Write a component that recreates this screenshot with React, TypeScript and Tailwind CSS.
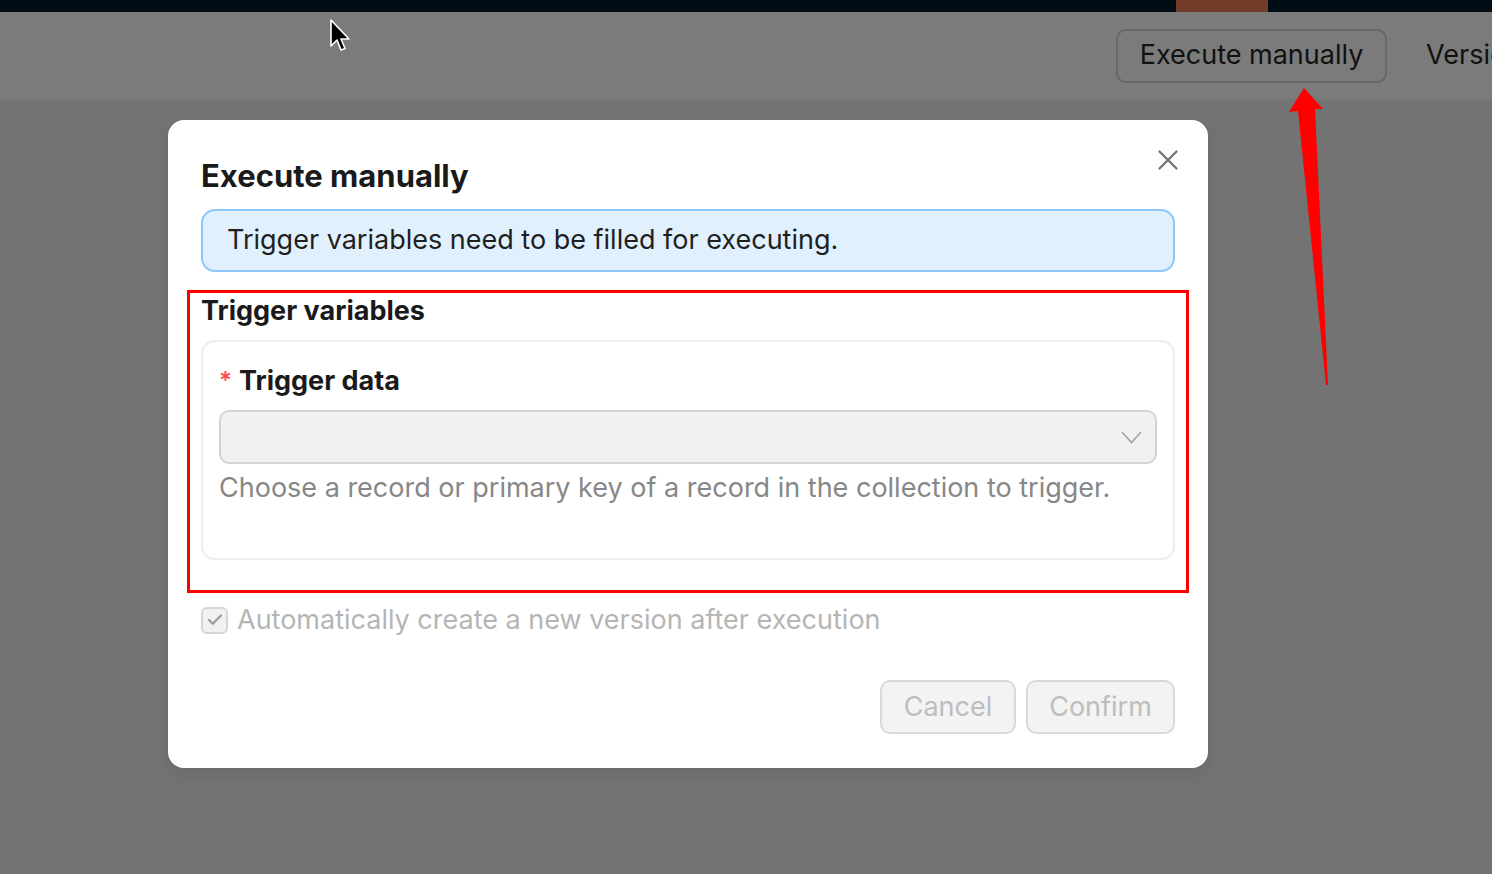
import { Check, X } from 'lucide-react'

export default function App() {
  return (
    <div className="relative h-[874px] w-[1492px] overflow-hidden bg-[#737373] font-['Inter',sans-serif] text-[#1f1f1f]">
      {/* top strip */}
      <div className="flex h-[12px] bg-[#010d15]">
        <div className="ml-[1176px] w-[92px] bg-[#733c2a]" />
      </div>

      {/* dimmed header */}
      <div className="flex h-[88px] items-center overflow-hidden whitespace-nowrap border-b border-[#767676] bg-[#7b7b7b]">
        <div className="ml-[1116px] flex shrink-0 items-center gap-[39px]">
          <button className="h-[54px] w-[271px] rounded-[10px] border-2 border-[#676767] text-[27px] text-[#111]">
            Execute manually
          </button>
          <span className="text-[27px] text-[#111]">Version</span>
        </div>
      </div>

      {/* modal */}
      <div className="absolute left-[168px] top-[120px] h-[648px] w-[1040px] rounded-[16px] bg-white px-[33px] pt-[36px] shadow-[0_6px_16px_rgba(0,0,0,0.08)]">
        <button className="absolute left-[983px] top-[23px] text-[#787878]">
          <X size={34} strokeWidth={1.7} />
        </button>

        <h2 className="text-[31px] font-bold leading-[40px] text-[#1a1a1a]">Execute manually</h2>

        <div className="mt-[13px] flex h-[63px] items-center rounded-[14px] border-2 border-[#8ec7fb] bg-[#e1f0fd] pl-[24px] text-[27px] text-[#1f1f1f]">
          Trigger variables need to be filled for executing.
        </div>

        <div className="mt-[21px] text-[27px] font-bold leading-[36px] text-[#1a1a1a]">Trigger variables</div>

        <div className="mt-[11px] rounded-[14px] border-2 border-[#ededed] px-[16px] pb-[52px] pt-[20px]">
          <div className="flex items-center text-[27px] font-bold leading-[36px] text-[#1a1a1a]">
            <span className="mr-[7px] self-start pt-[1px] text-[24px] font-semibold text-[#ff4d4f]">*</span>
            Trigger data
          </div>
          <div className="mt-[11px] flex h-[54px] items-center justify-end rounded-[10px] border-2 border-[#d3d3d3] bg-[#f1f1f1] pr-[13px]">
            <svg width="21" height="13" viewBox="0 0 21 13" fill="none">
              <polyline points="1,1 10.5,11.5 20,1" stroke="#a3a3a3" strokeWidth="1.6" />
            </svg>
          </div>
          <div className="mt-[6px] text-[27px] leading-[36px] text-[#878787]">
            Choose a record or primary key of a record in the collection to trigger.
          </div>
        </div>

        <div className="mt-[42px] flex items-center gap-[9px] text-[27px] leading-[36px] text-[#b5b5b5]">
          <span className="flex h-[27px] w-[27px] items-center justify-center rounded-[6px] border-2 border-[#d6d6d6] bg-[#f1f1f1] text-[#9e9e9e]">
            <Check size={18} strokeWidth={3.2} />
          </span>
          Automatically create a new version after execution
        </div>

        <div className="mt-[42px] flex justify-end gap-[10px]">
          <button className="h-[54px] w-[136px] rounded-[10px] border-2 border-[#d9d9d9] bg-[#f3f3f3] text-[27px] text-[#bdbdbd]">
            Cancel
          </button>
          <button className="h-[54px] w-[149px] rounded-[10px] border-2 border-[#d9d9d9] bg-[#f3f3f3] text-[27px] text-[#bdbdbd]">
            Confirm
          </button>
        </div>

        {/* annotation box */}
        <div className="absolute left-[19px] top-[170px] h-[303px] w-[1002px] border-[3px] border-[#ff0000]" />
      </div>

      {/* annotation arrow */}
      <svg className="absolute left-0 top-0" width="1492" height="874">
        <polygon
          points="1304,88 1323,109 1315,109 1328,385 1326,385 1298,111 1289,112"
          fill="#ff0000"
        />
      </svg>

      {/* mouse cursor */}
      <svg className="absolute left-[329px] top-[19px]" width="24" height="36" viewBox="0 0 24 36">
        <path
          d="M2 1 L2 27 L8 21 L12 31 L16 29.5 L12 20 L20 20 Z"
          fill="#000"
          stroke="#fff"
          strokeWidth="1.6"
          strokeLinejoin="round"
        />
      </svg>
    </div>
  )
}
